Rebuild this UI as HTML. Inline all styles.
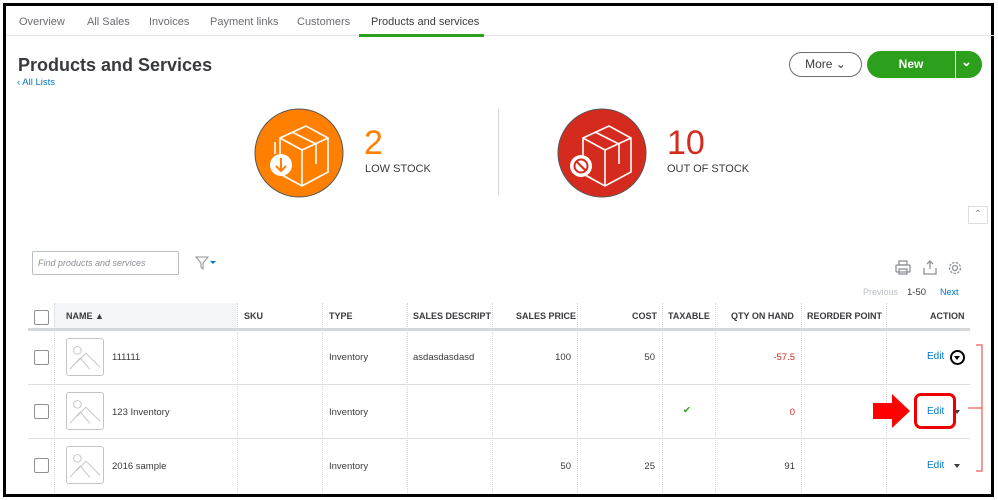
<!DOCTYPE html>
<html><head><meta charset="utf-8"><style>
*{box-sizing:border-box;margin:0;padding:0}
body{width:998px;height:500px;background:#fff;font-family:"Liberation Sans",sans-serif;position:relative;overflow:hidden;color:#393a3d}
.a{position:absolute}
.frame{position:absolute;left:3px;top:3px;width:991px;height:494px;border:3px solid #000}
.tab{position:absolute;top:16px;font-size:11px;color:#6b6c72}
.th{position:absolute;top:311px;font-size:9px;font-weight:bold;color:#393a3d}
.td{position:absolute;font-size:9.5px;color:#393a3d}
.vl{position:absolute;top:303px;height:190px;border-left:1px dotted #d4d7dc}
.hl{position:absolute;left:28px;width:942px;height:1px;background:#dcdee2}
.cb{position:absolute;left:34px;width:15px;height:15px;border:1px solid #8d9096;border-radius:2px;background:#fff}
.img{position:absolute;left:66px;width:38px;height:38px;border:1px solid #c1c4c9;border-radius:3px}
.edit{position:absolute;left:927px;font-size:10px;color:#0077c5}
</style></head><body>
<div class="frame"></div>
<div class="tab" style="left:19px">Overview</div>
<div class="tab" style="left:87px">All Sales</div>
<div class="tab" style="left:149px">Invoices</div>
<div class="tab" style="left:210px">Payment links</div>
<div class="tab" style="left:297px">Customers</div>
<div class="tab" style="left:371px;color:#393a3d">Products and services</div>
<div class="a" style="left:6px;top:35px;width:988px;height:1px;background:#e3e5e8"></div>
<div class="a" style="left:359px;top:34px;width:125px;height:3px;background:#2ca01c"></div>
<div class="a" style="left:18px;top:55px;font-size:18px;font-weight:bold;color:#393a3d">Products and Services</div>
<div class="a" style="left:17px;top:77px;font-size:9.5px;color:#0077c5">&#8249; All Lists</div>
<div class="a" style="left:789px;top:52px;width:73px;height:25px;border:1px solid #6b6c72;border-radius:13px;font-size:12px;text-align:center;line-height:23px">More &#8964;</div>
<div class="a" style="left:867px;top:51px;width:115px;height:27px;background:#2ca01c;border-radius:14px"></div>
<div class="a" style="left:867px;top:57px;width:88px;text-align:center;color:#fff;font-size:12px;font-weight:bold">New</div>
<div class="a" style="left:955px;top:51px;width:1px;height:27px;background:#fff"></div>
<div class="a" style="left:961px;top:54px;color:#fff;font-size:13px;font-weight:bold">&#8964;</div>

<svg class="a" style="left:254px;top:108px" width="90" height="90" viewBox="0 0 90 90"><circle cx="45" cy="45" r="44" fill="#ff8000" stroke="#555" stroke-width="1"/><g fill="none" stroke="#fff" stroke-width="1.6"><path d="M26 30 L52 18 L74 30 L74 64 L48 78 L26 66 Z M26 30 L48 42 L74 30 M48 42 V78 M38 24 L62 36 L62 56 M21 34 V46 M34 70 L28 67"/></g><circle cx="27" cy="57" r="11" fill="#fff"/><path d="M27 50 V63 M22 58 L27 63 L32 58" stroke="#ff8000" stroke-width="2" fill="none"/></svg>
<div class="a" style="left:364px;top:126px;font-size:34px;color:#ff8000;line-height:34px">2</div>
<div class="a" style="left:365px;top:163px;font-size:11px;color:#393a3d">LOW STOCK</div>
<div class="a" style="left:498px;top:109px;width:1px;height:86px;background:#d4d7dc"></div>
<svg class="a" style="left:557px;top:108px" width="90" height="90" viewBox="0 0 90 90"><circle cx="45" cy="45" r="44" fill="#d52b1e" stroke="#555" stroke-width="1"/><g fill="none" stroke="#fff" stroke-width="1.6"><path d="M26 30 L52 18 L74 30 L74 64 L48 78 L26 66 Z M26 30 L48 42 L74 30 M48 42 V78 M38 24 L62 36 L62 56 M34 70 L30 68"/></g><circle cx="24" cy="58" r="11" fill="#fff"/><circle cx="24" cy="58" r="6.5" fill="none" stroke="#d52b1e" stroke-width="2"/><path d="M19.5 53.5 L28.5 62.5" stroke="#d52b1e" stroke-width="2"/></svg>
<div class="a" style="left:667px;top:126px;font-size:34px;color:#d52b1e;line-height:34px">10</div>
<div class="a" style="left:667px;top:163px;font-size:11px;color:#393a3d">OUT OF STOCK</div>
<div class="a" style="left:968px;top:206px;width:20px;height:18px;border:1px solid #dcdee2;font-size:10px;color:#8d9096;text-align:center;line-height:16px">&#8963;</div>

<div class="a" style="left:32px;top:251px;width:147px;height:24px;border:1px solid #babec5;border-radius:2px;font-size:9px;font-style:italic;color:#8d9096;padding:6px 5px">Find products and services</div>
<svg class="a" style="left:195px;top:256px" width="24" height="14"><path d="M1 1 H13 L8 7 V13 L6 11 V7 Z" fill="none" stroke="#8d9096"/><path d="M15 5 H21 L18 8 Z" fill="#0077c5"/></svg>
<svg class="a" style="left:894px;top:259px" width="72" height="18"><g fill="none" stroke="#8d9096" stroke-width="1.3"><rect x="2" y="6" width="14" height="7" rx="1"/><rect x="5" y="2" width="8" height="4"/><rect x="5" y="10" width="8" height="5"/><path d="M36 10 V2 M33 5 L36 2 L39 5 M30 9 V15 H42 V9"/><circle cx="61" cy="9" r="2.5"/><circle cx="61" cy="9" r="5.5" stroke-dasharray="2.5 1.3"/></g></svg>
<div class="a" style="left:863px;top:287px;font-size:9px;color:#babec5">Previous</div>
<div class="a" style="left:907px;top:287px;font-size:9.5px;color:#393a3d">1-50</div>
<div class="a" style="left:940px;top:287px;font-size:9px;color:#0077c5">Next</div>

<div class="a" style="left:54px;top:303px;width:183px;height:27px;background:#f4f5f8"></div>
<div class="a" style="left:28px;top:328px;width:942px;height:3px;background:#d4d7dc"></div>
<div class="vl" style="left:54px"></div><div class="vl" style="left:237px"></div><div class="vl" style="left:322px"></div><div class="vl" style="left:407px"></div><div class="vl" style="left:492px"></div><div class="vl" style="left:577px"></div><div class="vl" style="left:662px"></div><div class="vl" style="left:715px"></div><div class="vl" style="left:801px"></div><div class="vl" style="left:886px"></div>
<div class="cb" style="top:310px"></div>
<div class="th" style="left:66px">NAME &#9650;</div>
<div class="th" style="left:244px">SKU</div>
<div class="th" style="left:329px">TYPE</div>
<div class="th" style="left:413px;width:78px;overflow:hidden;white-space:nowrap">SALES DESCRIPTION</div>
<div class="th" style="left:516px">SALES PRICE</div>
<div class="th" style="left:632px">COST</div>
<div class="th" style="left:668px">TAXABLE</div>
<div class="th" style="left:731px">QTY ON HAND</div>
<div class="th" style="left:807px">REORDER POINT</div>
<div class="th" style="left:930px">ACTION</div>

<div class="hl" style="top:384px"></div><div class="hl" style="top:438px"></div>
<div class="cb" style="top:350px"></div><div class="cb" style="top:404px"></div><div class="cb" style="top:458px"></div>
<svg class="img" style="top:338px" viewBox="0 0 38 38"><circle cx="11" cy="12" r="4" fill="none" stroke="#c1c4c9"/><path d="M3 32 L14 20 L24 32 M10 25 L20 15 L35 30" fill="none" stroke="#c1c4c9"/></svg>
<svg class="img" style="top:392px" viewBox="0 0 38 38"><circle cx="11" cy="12" r="4" fill="none" stroke="#c1c4c9"/><path d="M3 32 L14 20 L24 32 M10 25 L20 15 L35 30" fill="none" stroke="#c1c4c9"/></svg>
<svg class="img" style="top:446px" viewBox="0 0 38 38"><circle cx="11" cy="12" r="4" fill="none" stroke="#c1c4c9"/><path d="M3 32 L14 20 L24 32 M10 25 L20 15 L35 30" fill="none" stroke="#c1c4c9"/></svg>
<div class="td" style="left:112px;top:352px">111111</div>
<div class="td" style="left:112px;top:407px">123 Inventory</div>
<div class="td" style="left:112px;top:461px">2016 sample</div>
<div class="td" style="left:329px;top:352px">Inventory</div>
<div class="td" style="left:329px;top:407px">Inventory</div>
<div class="td" style="left:329px;top:461px">Inventory</div>
<div class="td" style="left:413px;top:352px">asdasdasdasd</div>
<div class="td" style="left:540px;top:352px;width:31px;text-align:right">100</div>
<div class="td" style="left:540px;top:461px;width:31px;text-align:right">50</div>
<div class="td" style="left:620px;top:352px;width:35px;text-align:right">50</div>
<div class="td" style="left:620px;top:461px;width:35px;text-align:right">25</div>
<div class="td" style="left:683px;top:405px;color:#2ca01c">&#10004;</div>
<div class="td" style="left:750px;top:352px;width:45px;text-align:right;color:#d52b1e">-57.5</div>
<div class="td" style="left:750px;top:407px;width:45px;text-align:right;color:#d52b1e">0</div>
<div class="td" style="left:750px;top:461px;width:45px;text-align:right">91</div>
<div class="edit" style="top:351px">Edit</div>
<div class="a" style="left:950px;top:350px;width:15px;height:15px;border:2px solid #000;border-radius:50%"></div>
<div class="a" style="left:954px;top:356px;border:3px solid transparent;border-top:4px solid #000"></div>
<div class="edit" style="top:406px">Edit</div>
<div class="a" style="left:954px;top:410px;border:3.5px solid transparent;border-top:4px solid #393a3d"></div>
<div class="edit" style="top:460px">Edit</div>
<div class="a" style="left:954px;top:464px;border:3.5px solid transparent;border-top:4px solid #393a3d"></div>
<div class="a" style="left:914px;top:393px;width:42px;height:36px;border:3px solid #e00;border-radius:7px"></div>
<svg class="a" style="left:872px;top:393px" width="40" height="36"><path d="M1 10 H20 V1 L38 18 L20 35 V26 H1 Z" fill="#f00"/></svg>
<svg class="a" style="left:964px;top:344px" width="20" height="128"><path d="M12 1 H18 V127 H12 M18 64 H4" fill="none" stroke="#e33" stroke-width="1"/></svg>
</body></html>
